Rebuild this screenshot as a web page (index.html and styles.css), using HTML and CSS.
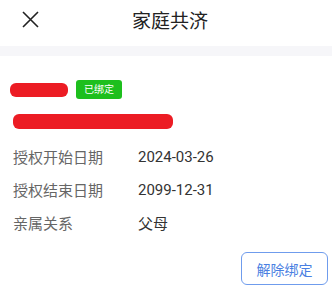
FILE: index.html
```html
<!DOCTYPE html>
<html>
  <head>
    <title>家庭共济</title>
    <link rel="stylesheet" href="styles.css">
  </head>
  <body>
    <div class="header">
      <span class="close">
        <svg width="17" height="17" viewBox="0 0 17 17">
          <path d="M1 1 L16 16 M16 1 L1 16" stroke="#222" stroke-width="1.6" fill="none" />
        </svg>
      </span>
      <h1>家庭共济</h1>
    </div>
    <div class="gap"></div>

    <div class="card">
      <!-- 姓名 + 状态 -->
      <div class="name-row">
        <span class="mask mask-name"></span>
        <span class="badge">已绑定</span>
      </div>
      <div class="id-row">
        <span class="mask mask-id"></span>
      </div>

      <!-- 授权信息 -->
      <div class="info-row">
        <span class="label">授权开始日期</span>
        <span class="value">2024-03-26</span>
      </div>
      <div class="info-row">
        <span class="label">授权结束日期</span>
        <span class="value">2099-12-31</span>
      </div>
      <div class="info-row">
        <span class="label">亲属关系</span>
        <span class="value">父母</span>
      </div>

      <div class="actions">
        <button class="unbind">解除绑定</button>
      </div>
    </div>
  </body>
</html>
```

FILE: styles.css
```css
body {
  margin: 0;
  background: #fff;
  font-family: Roboto, "Noto Sans CJK SC", sans-serif;
  color: #333;
}
.header {
  position: relative;
  height: 46px;
  display: flex;
  align-items: center;
  justify-content: center;
}
.header h1 {
  margin: 0 0 8px 8px;
  font-size: 19px;
  font-weight: normal;
  color: #222;
}
.close {
  position: absolute;
  left: 22px;
  top: 11px;
  line-height: 0;
}
.gap {
  height: 10px;
  background: #f6f6f9;
}
.card {
  padding: 0 4px 0 13px;
}
.name-row {
  display: flex;
  align-items: center;
  margin-top: 23px;
  height: 20px;
}
.mask {
  display: inline-block;
  background: #ec1c24;
  border-radius: 6px;
}
.mask-name {
  width: 58px;
  height: 14px;
  margin-left: -3px;
  margin-top: 2px;
}
.badge {
  margin-left: 8px;
  background: #1dbf1d;
  color: #fff;
  font-size: 10px;
  line-height: 19px;
  padding: 0 8px;
  border-radius: 3px;
}
.id-row {
  margin-top: 15px;
  height: 15px;
  line-height: 0;
}
.mask-id {
  width: 160px;
  height: 15px;
}
.info-row {
  display: flex;
  align-items: center;
  height: 33px;
  font-size: 15px;
}
.id-row + .info-row {
  margin-top: 11px;
}
.label {
  width: 125px;
  color: #666;
}
.value {
  color: #333;
}
.actions {
  display: flex;
  justify-content: flex-end;
  margin-top: 13px;
}
.unbind {
  width: 87px;
  height: 33px;
  background: #fff;
  border: 1px solid #6f9ced;
  border-radius: 6px;
  color: #4a7fe2;
  font-size: 14px;
  font-family: Roboto, "Noto Sans CJK SC", sans-serif;
}
```
